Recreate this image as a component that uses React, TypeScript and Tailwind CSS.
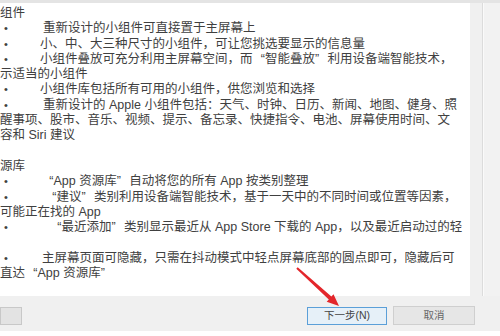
const font = '[font-family:"Liberation_Sans","Noto_Sans_CJK_SC",sans-serif]';

function Lq() {
  return <span className="inline-block w-[12.5px] text-right">“</span>;
}
function Rq() {
  return <span className="inline-block w-[12.5px] text-left">”</span>;
}

function Bullet({ indent, children }: { indent: string; children: React.ReactNode }) {
  return (
    <div className="flex whitespace-nowrap">
      <span className={`pl-[4px] shrink-0 text-[11px] ${indent}`}>•</span>
      <span>{children}</span>
    </div>
  );
}

function Plain({ children }: { children?: React.ReactNode }) {
  return <div className="whitespace-nowrap h-[15.3px]">{children}</div>;
}

export default function App() {
  return (
    <div className={`w-[500px] h-[336px] bg-white relative overflow-hidden ${font}`}>
      <div className="h-[3px] bg-[#e4e4e4]" />
      <div className="flex h-[293px]">
        <div className="w-[470px] overflow-hidden bg-white pt-[3px] text-[12.5px] leading-[15.3px] text-[#404040]">
          <Plain>组件</Plain>
          <Bullet indent="w-[43px]">重新设计的小组件可直接置于主屏幕上</Bullet>
          <Bullet indent="w-[40px]">小、中、大三种尺寸的小组件，可让您挑选要显示的信息量</Bullet>
          <Bullet indent="w-[40px]">
            小组件叠放可充分利用主屏幕空间，而<Lq />智能叠放<Rq />利用设备端智能技术，
          </Bullet>
          <Plain>示适当的小组件</Plain>
          <Bullet indent="w-[40px]">小组件库包括所有可用的小组件，供您浏览和选择</Bullet>
          <Bullet indent="w-[43px]">重新设计的 Apple 小组件包括：天气、时钟、日历、新闻、地图、健身、照</Bullet>
          <Plain>醒事项、股市、音乐、视频、提示、备忘录、快捷指令、电池、屏幕使用时间、文</Plain>
          <Plain>容和 Siri 建议</Plain>
          <Plain />
          <Plain>源库</Plain>
          <Bullet indent="w-[41px]">
            <Lq />App 资源库<Rq />自动将您的所有 App 按类别整理
          </Bullet>
          <Bullet indent="w-[44px]">
            <Lq />建议<Rq />类别利用设备端智能技术，基于一天中的不同时间或位置等因素，
          </Bullet>
          <Plain>可能正在找的 App</Plain>
          <Bullet indent="w-[49px]">
            <Lq />最近添加<Rq />类别显示最近从 App Store 下载的 App，以及最近启动过的轻
          </Bullet>
          <Plain />
          <Bullet indent="w-[42px]">主屏幕页面可隐藏，只需在抖动模式中轻点屏幕底部的圆点即可，隐藏后可</Bullet>
          <Plain>
            直达<Lq />App 资源库<Rq />
          </Plain>
        </div>
        <div className="flex-1 flex bg-[#f0f0f0]">
          <div className="w-[12px]" />
          <div className="w-[1px] bg-[#dcdcdc]" />
          <div className="w-[1px] bg-[#fafafa]" />
          <div className="flex-1 bg-[#f2f2f2]" />
        </div>
      </div>
      <div className="h-[35px] bg-[#f0f0f0] flex items-start pt-[11px] text-[10.5px] text-[#444]">
        <div className="w-[22px] h-[18px] border border-[#c8c8c8] bg-[#e3e3e3]" />
        <div className="ml-[285px] w-[80px] h-[18px] border border-[#5b9fd8] bg-[#e6f0f8] flex items-center justify-center">
          下一步(N)
        </div>
        <div className="ml-[6px] w-[82px] h-[19px] -mt-[1px] border border-[#cfcfcf] bg-[#e6e6e6] flex items-center justify-center text-[#666]">
          取消
        </div>
      </div>
      <svg className="absolute left-0 top-0 pointer-events-none" width="500" height="336">
        <polygon
          points="297.7,267.3 331.4,296.5 333.5,294.3 339,306 326.7,301.7 328.8,299.5 296.3,268.7"
          fill="#e3262b"
        />
      </svg>
    </div>
  );
}
